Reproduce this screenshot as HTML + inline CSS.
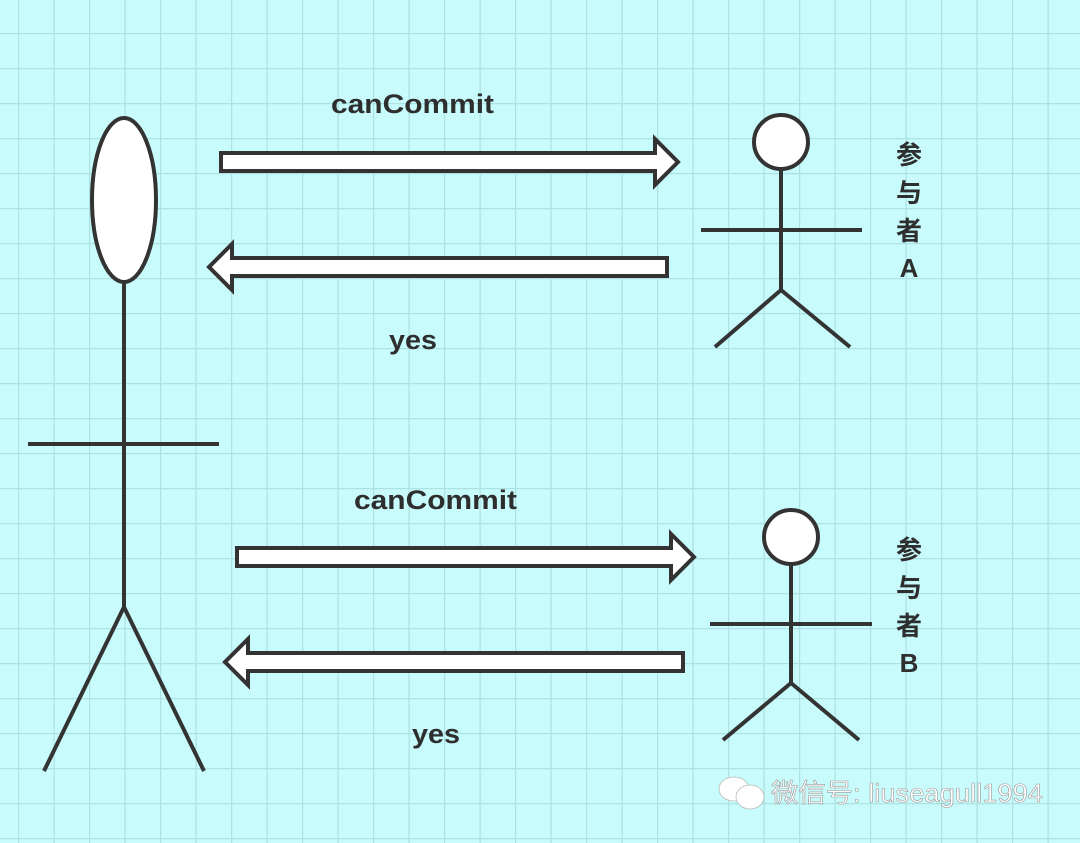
<!DOCTYPE html>
<html><head><meta charset="utf-8"><style>
html,body{margin:0;padding:0;width:1080px;height:843px;overflow:hidden;background:#c8fcfc}
svg{display:block}
text{font-family:"Liberation Sans","Noto Sans CJK SC",sans-serif;fill:#2e2e2e}
</style></head><body>
<svg width="1080" height="843" viewBox="0 0 1080 843" xmlns="http://www.w3.org/2000/svg">
<defs>
<pattern id="g" x="18" y="-2" width="35.5" height="35" patternUnits="userSpaceOnUse">
<path d="M0 0V35M0 0H35.5" stroke="#aee2e2" stroke-width="2.5" fill="none"/>
</pattern>
</defs>
<rect width="1080" height="843" fill="#c8fcfc"/>
<rect width="1080" height="843" fill="url(#g)"/>
<g stroke="#333" stroke-width="4" fill="#fff" stroke-linejoin="miter">
<polygon points="221,153 655,153 655,139 678,162 655,185 655,171 221,171"/>
<polygon points="667,258 232,258 232,244 209,267 232,290 232,276 667,276"/>
<polygon points="237,548 671,548 671,534 694,557 671,580 671,566 237,566"/>
<polygon points="683,653 248,653 248,639 225,662 248,685 248,671 683,671"/>
<ellipse cx="124" cy="200" rx="32" ry="82"/>
<circle cx="781" cy="142" r="27"/>
<circle cx="791" cy="537" r="27"/>
</g>
<g stroke="#333" stroke-width="4" fill="none">
<path d="M124 282V607M28 444H219M124 607L44 771M124 607L204 771"/>
<path d="M781 169V290M701 230H862M781 290L715 347M781 290L850 347"/>
<path d="M791 564V683M710 624H872M791 683L723 740M791 683L859 740"/>
</g>
<g font-size="27" font-weight="bold" lengthAdjust="spacingAndGlyphs">
<text x="331" y="113" textLength="163" lengthAdjust="spacingAndGlyphs">canCommit</text>
<text x="354" y="509" textLength="163" lengthAdjust="spacingAndGlyphs">canCommit</text>
<text x="389" y="349" textLength="48" lengthAdjust="spacingAndGlyphs">yes</text>
<text x="412" y="743" textLength="48" lengthAdjust="spacingAndGlyphs">yes</text>
</g>
<g font-size="26" text-anchor="middle" font-weight="bold">
<text x="909" y="164">参</text><text x="909" y="202">与</text><text x="909" y="240">者</text><text x="909" y="277">A</text>
<text x="909" y="559">参</text><text x="909" y="597">与</text><text x="909" y="635">者</text><text x="909" y="672">B</text>
</g>
<g fill="#fff" stroke="#bbb" stroke-width="0.8">
<ellipse cx="734" cy="789" rx="15" ry="12"/>
<ellipse cx="750" cy="797" rx="14" ry="12"/>
</g>
<text x="771" y="802" font-size="26" textLength="272" lengthAdjust="spacingAndGlyphs" style="fill:#fff" stroke="#999" stroke-width="0.6">微信号: liuseagull1994</text>
</svg>
</body></html>
